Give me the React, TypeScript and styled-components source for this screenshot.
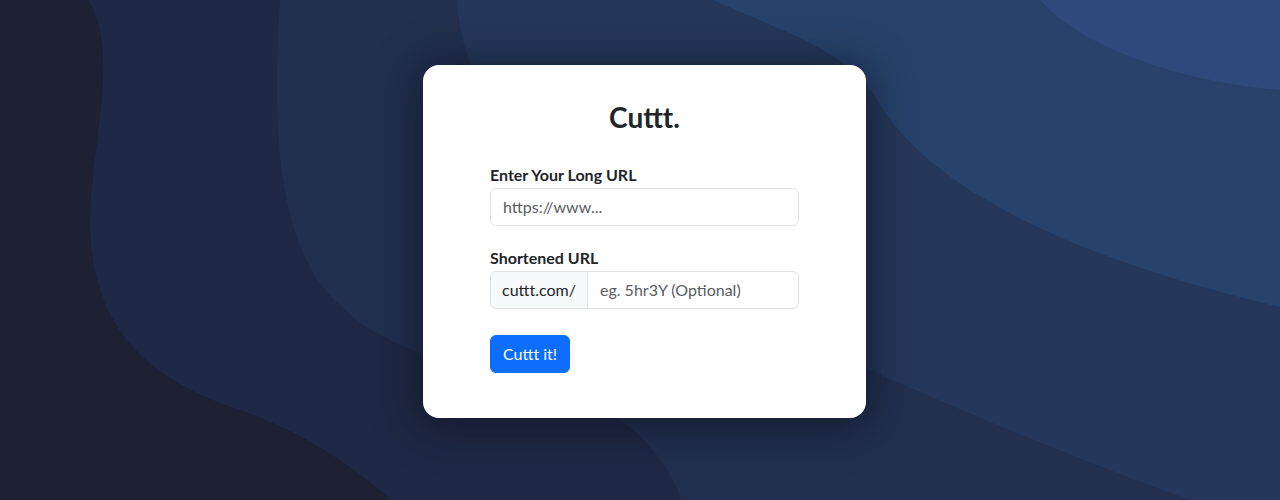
import React from "react";
import styled, { createGlobalStyle } from "styled-components";

const GlobalStyle = createGlobalStyle`
  html, body {
    margin: 0;
    padding: 0;
  }
  body {
    font-family: Lato, "Liberation Sans", sans-serif;
    background: #1d2235;
  }
  * { box-sizing: border-box; }
`;

const Page = styled.main`
  position: relative;
  width: 100%;
  height: 500px;
  overflow: hidden;
  display: flex;
  justify-content: center;
  align-items: flex-start;
  padding: 65px 0 0 9px;
`;

const Waves = styled.svg`
  position: absolute;
  inset: 0;
  width: 100%;
  height: 100%;
  z-index: 0;
`;

const Card = styled.section`
  position: relative;
  z-index: 1;
  width: 443px;
  background: #ffffff;
  border-radius: 16px;
  padding: 36px 67px 45px;
  box-shadow: 0 4px 42px 4px rgba(10, 14, 26, 0.6);
  display: flex;
  flex-direction: column;
`;

const Title = styled.h3`
  margin: 0 0 28px;
  text-align: center;
  font-size: 28px;
  line-height: 1.2;
  font-weight: 700;
  color: #212529;
`;

const Field = styled.div<{ $gap: number }>`
  display: flex;
  flex-direction: column;
  margin-bottom: ${(p) => p.$gap}px;
`;

const Label = styled.label`
  font-size: 16px;
  line-height: 24px;
  font-weight: 700;
  color: #212529;
  margin-bottom: 1px;
`;

const Input = styled.input`
  height: 38px;
  width: 100%;
  padding: 6px 12px;
  font-family: inherit;
  font-size: 16px;
  color: #212529;
  background: #fff;
  border: 1px solid #dee2e6;
  border-radius: 6px;
  outline: none;
  &::placeholder {
    color: #595c5f;
  }
`;

const Group = styled.div`
  display: flex;
  align-items: stretch;
  width: 100%;
`;

const Addon = styled.span`
  display: flex;
  align-items: center;
  height: 38px;
  padding: 6px 11px;
  font-size: 16px;
  color: #212529;
  background: #f8f9fa;
  border: 1px solid #dee2e6;
  border-radius: 6px 0 0 6px;
  white-space: nowrap;
`;

const GroupInput = styled(Input)`
  flex: 1;
  min-width: 0;
  margin-left: -1px;
  border-radius: 0 6px 6px 0;
`;

const Button = styled.button`
  align-self: flex-start;
  height: 38px;
  padding: 6px 12px;
  font-family: inherit;
  font-size: 16px;
  color: #fff;
  background: #0d6efd;
  border: 1px solid #0d6efd;
  border-radius: 6px;
  cursor: pointer;
`;

export default function App() {
  return (
    <>
      <GlobalStyle />
      <Page>
        <Waves viewBox="0 0 1280 500" preserveAspectRatio="none" aria-hidden="true">
          <rect x="0" y="0" width="1280" height="500" fill="#2d4a7a" />
          <path d="M0,0 L1040,0 C1080,45 1170,80 1280,90 L1280,500 L0,500 Z" fill="#27426b" />
          <path d="M0,0 L713,0 C790,35 850,50 880,105 C940,200 1100,265 1280,307 L1280,500 L0,500 Z" fill="#25375a" />
          <path d="M0,0 L457,0 C465,120 560,230 760,320 C900,385 1050,450 1190,500 L0,500 Z" fill="#222f4e" />
          <path d="M0,0 L280,0 C272,120 275,250 340,305 C400,370 560,380 620,420 C650,440 670,470 682,500 L0,500 Z" fill="#1f2844" />
          <path d="M0,0 L88,0 C120,50 92,140 90,220 C90,330 150,380 240,410 C310,435 350,465 392,500 L0,500 Z" fill="#1c2134" />
        </Waves>
        <Card>
          <Title>Cuttt.</Title>
          <Field $gap={20}>
            <Label htmlFor="long-url">Enter Your Long URL</Label>
            <Input id="long-url" type="text" placeholder="https://www..." />
          </Field>
          <Field $gap={26}>
            <Label htmlFor="short-url">Shortened URL</Label>
            <Group>
              <Addon>cuttt.com/</Addon>
              <GroupInput id="short-url" type="text" placeholder="eg. 5hr3Y (Optional)" />
            </Group>
          </Field>
          <Button type="button">Cuttt it!</Button>
        </Card>
      </Page>
    </>
  );
}
